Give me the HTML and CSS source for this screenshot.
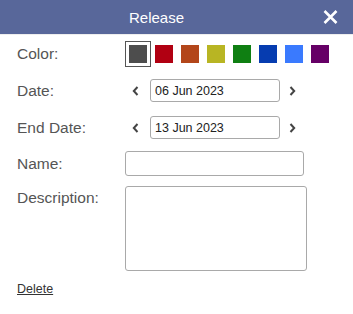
FILE: index.html
```html
<!DOCTYPE html>
<html lang="en">
<head>
  <meta charset="UTF-8">
  <title>Release</title>
  <link rel="stylesheet" href="styles.css">
</head>
<body>
  <!-- Dialog header -->
  <header class="dlg-head">
    <div class="dlg-title">Release</div>
    <button class="dlg-close" aria-label="Close">
      <svg width="15" height="14" viewBox="0 0 15 14"><path d="M1.5 1 L13.5 13 M13.5 1 L1.5 13" stroke="#fff" stroke-width="2.6" fill="none"/></svg>
    </button>
  </header>

  <!-- Form -->
  <main class="dlg-body">
    <div class="row row-color">
      <label>Color:</label>
      <div class="swatches">
        <span class="swatch selected"><i style="background:#4d4d4d"></i></span>
        <span class="swatch"><i style="background:#b10012"></i></span>
        <span class="swatch"><i style="background:#b3461a"></i></span>
        <span class="swatch"><i style="background:#b8b523"></i></span>
        <span class="swatch"><i style="background:#0f7f12"></i></span>
        <span class="swatch"><i style="background:#063cb0"></i></span>
        <span class="swatch"><i style="background:#3a7afe"></i></span>
        <span class="swatch"><i style="background:#660066"></i></span>
      </div>
    </div>

    <div class="row row-date">
      <label>Date:</label>
      <div class="date-pick">
        <button class="nav prev"><svg width="7" height="10" viewBox="0 0 7 10"><path d="M5.5 1 L1.8 5 L5.5 9" stroke="#444" stroke-width="2" fill="none"/></svg></button>
        <input class="date-input" type="text" value="06 Jun 2023">
        <button class="nav next"><svg width="7" height="10" viewBox="0 0 7 10"><path d="M1.5 1 L5.2 5 L1.5 9" stroke="#444" stroke-width="2" fill="none"/></svg></button>
      </div>
    </div>

    <div class="row row-end">
      <label>End Date:</label>
      <div class="date-pick">
        <button class="nav prev"><svg width="7" height="10" viewBox="0 0 7 10"><path d="M5.5 1 L1.8 5 L5.5 9" stroke="#444" stroke-width="2" fill="none"/></svg></button>
        <input class="date-input" type="text" value="13 Jun 2023">
        <button class="nav next"><svg width="7" height="10" viewBox="0 0 7 10"><path d="M1.5 1 L5.2 5 L1.5 9" stroke="#444" stroke-width="2" fill="none"/></svg></button>
      </div>
    </div>

    <div class="row row-name">
      <label>Name:</label>
      <input class="text-input" type="text">
    </div>

    <div class="row row-desc">
      <label>Description:</label>
      <textarea class="text-area"></textarea>
    </div>

    <a href="#" class="delete">Delete</a>
  </main>
</body>
</html>
```

FILE: styles.css
```css
/* --- Vars and reset --- */
:root {
  --head: #58679a;
  --label: #555;
  --border: #a9a9a9;
  --font: 'Liberation Sans', Arial, sans-serif;
}
* { box-sizing: border-box; margin: 0; padding: 0; }
body { font-family: var(--font); background: #fff; color: #333; }

/* --- Header --- */
.dlg-head {
  display: flex;
  align-items: center;
  height: 34px;
  background: var(--head);
  border-bottom: 1px solid #eee;
  box-sizing: content-box;
}
.dlg-title { flex: 1; text-align: center; color: #fff; font-size: 15px; }
.dlg-close {
  width: 40px;
  height: 34px;
  display: flex;
  align-items: center;
  padding-left: 10px;
  background: none;
  border: none;
}

/* --- Body --- */
.dlg-body { display: flex; flex-direction: column; padding: 6px 0 0 17px; }
.row { display: grid; grid-template-columns: 108px auto; align-items: center; }
.row label { font-size: 15.5px; color: var(--label); }
.row-date { margin-top: 12px; }
.row-end { margin-top: 14px; }
.row-name { margin-top: 12px; }
.row-desc { margin-top: 10px; align-items: start; }
.row-desc label { padding-top: 3px; }

/* --- Color swatches --- */
.swatches { display: flex; }
.swatch { width: 26px; height: 26px; padding: 4px; }
.swatch i { display: block; width: 18px; height: 18px; }
.swatch.selected { border: 1px solid #555; padding: 3px; }

/* --- Date pickers --- */
.date-pick { display: flex; align-items: center; }
.nav { display: flex; background: none; border: none; }
.nav.prev { padding: 0 11px 0 7px; }
.nav.next { padding-left: 9px; }
.date-input {
  width: 130px;
  height: 23px;
  border: 1px solid var(--border);
  border-radius: 3px;
  padding: 0 4px;
  font: 12.5px var(--font);
  color: #222;
}
.text-input {
  width: 179px;
  height: 25px;
  border: 1px solid var(--border);
  border-radius: 3px;
}
.text-area {
  width: 182px;
  height: 85px;
  border: 1px solid var(--border);
  border-radius: 3px;
  resize: none;
}

.delete { margin-top: 11px; font-size: 12.5px; color: #333; align-self: flex-start; }
```
